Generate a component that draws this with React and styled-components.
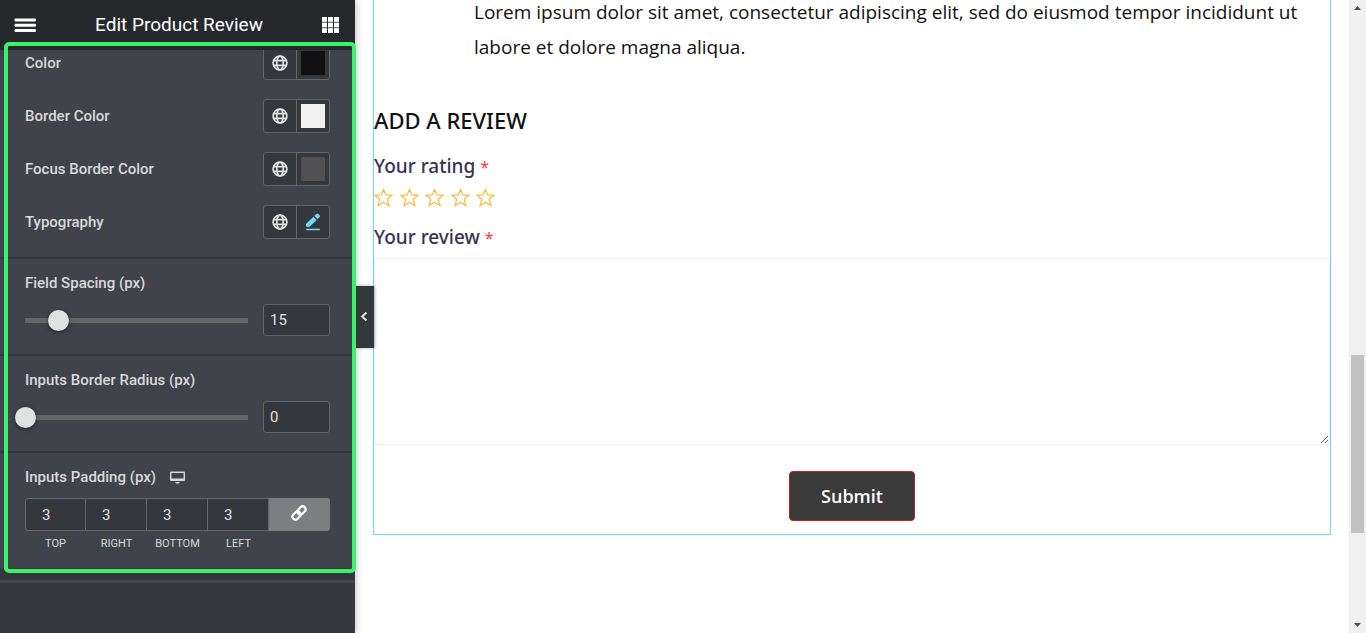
import React, { useState } from 'react';
import styled, { createGlobalStyle } from 'styled-components';

const GlobalStyle = createGlobalStyle`
    *, *::before, *::after {
        box-sizing: border-box;
    }
    body {
        margin: 0;
        background: #fff;
    }
`;

const Page = styled.div`
    display: flex;
    height: 100vh;
    overflow: hidden;
`;

const Panel = styled.aside`
    position: relative;
    z-index: 2;
    flex: 0 0 355px;
    display: flex;
    flex-direction: column;
    background: #34383c;
    box-shadow: 0 0 8px rgba(0, 0, 0, 0.3);
    color: #d8d9db;
    font-family: Roboto, sans-serif;
    font-size: 15px;
    line-height: 18px;
`;

const PanelHeader = styled.header`
    position: relative;
    z-index: 1;
    flex: none;
    display: flex;
    align-items: center;
    justify-content: space-between;
    height: 50px;
    padding: 0 16px 0 14px;
    background: #26292c;
    color: #fff;
`;

const PanelTitle = styled.h1`
    margin: 0;
    font-size: 19px;
    font-weight: 400;
    line-height: 24px;
`;

const IconButton = styled.button`
    display: flex;
    padding: 0;
    border: 0;
    background: none;
    color: inherit;
    cursor: pointer;
`;

const Controls = styled.div`
    border-bottom: 12px solid #34383c;
`;

const Highlight = styled.div`
    position: absolute;
    z-index: 2;
    top: 42px;
    left: 4px;
    right: -1px;
    height: 531px;
    border: 4px solid #3df26b;
    border-radius: 5px;
    pointer-events: none;
`;

const Section = styled.section`
    padding: 15px 25px 18px;
    background: #404349;

    & + & {
        border-top: 2px solid #34383c;
    }
`;

const ColorSection = styled(Section)`
    display: flex;
    flex-direction: column;
    gap: 19px;
    margin-top: -4px;
    padding-top: 0;
`;

const Row = styled.div`
    display: flex;
    align-items: center;
    justify-content: space-between;
`;

const Label = styled.label`
    display: block;
    font-weight: 500;
`;

const LabelRow = styled.div`
    display: flex;
    align-items: center;
    gap: 14px;
    margin-bottom: 12px;
`;

const ButtonPair = styled.div`
    display: flex;
    height: 34px;
    border: 1px solid #64666a;
    border-radius: 3px;
    background: #34383c;
    overflow: hidden;
`;

const PairButton = styled(IconButton)`
    align-items: center;
    justify-content: center;
    width: 32px;
    color: ${props => props.$accent ? '#71d7f7' : '#e0e1e3'};

    & + & {
        width: 33px;
        border-left: 1px solid #64666a;
    }
`;

const Swatch = styled.span`
    width: 24px;
    height: 24px;
    background: ${props => props.$color};
`;

const SliderRow = styled.div`
    display: flex;
    align-items: center;
    gap: 15px;
`;

const SliderTrack = styled.div`
    flex: 1;
    display: flex;
    margin: 0 -10px;
`;

const Slider = styled.input`
    appearance: none;
    width: 100%;
    height: 21px;
    margin: 0;
    background: linear-gradient(#64666a, #64666a) center / calc(100% - 20px) 5px no-repeat;

    &::-webkit-slider-thumb {
        appearance: none;
        width: 21px;
        height: 21px;
        border-radius: 50%;
        background: #e0e1e3;
        box-shadow: 0 1px 4px rgba(0, 0, 0, 0.5);
    }
`;

const NumberInput = styled.input`
    position: relative;
    width: 67px;
    height: 32px;
    padding: 0 6px;
    border: 1px solid #64666a;
    border-radius: 3px;
    background: #34383c;
    color: #e0e1e3;
    font: 400 15px/18px Roboto, sans-serif;
`;

const Dimensions = styled.div`
    display: grid;
    grid-template-columns: repeat(5, 1fr);
`;

const Dimension = styled.div`
    display: flex;
    flex-direction: column;
    align-items: center;
    gap: 7px;
`;

const DimensionInput = styled.input`
    width: 100%;
    height: 33px;
    padding: 0 16px;
    border: 1px solid #64666a;
    border-left-width: ${props => props.$first ? '1px' : '0'};
    border-radius: ${props => props.$first ? '3px 0 0 3px' : '0'};
    background: #34383c;
    color: #e0e1e3;
    font: 400 15px/18px Roboto, sans-serif;
`;

const DimensionLabel = styled.label`
    font-size: 11px;
    line-height: 12px;
    text-transform: uppercase;
`;

const LinkButton = styled(IconButton)`
    align-items: center;
    justify-content: center;
    height: 33px;
    padding: 0 2px 4px 0;
    border-radius: 0 3px 3px 0;
    background: #7d7e82;
    color: #fff;
`;

const PanelFooter = styled.div`
    height: 3px;
    background: #404349;
`;

const CollapseTab = styled.button`
    position: absolute;
    top: 286px;
    left: 100%;
    display: flex;
    align-items: center;
    justify-content: center;
    width: 19px;
    height: 62px;
    padding: 0 2px 0 0;
    border: 0;
    background: #34383c;
    color: #e0e1e3;
    box-shadow: 1px 0 3px rgba(0, 0, 0, 0.3);
`;

const Preview = styled.main`
    flex: 1;
    min-width: 0;
    padding: 0 18px;
    color: #111;
    font-family: "Open Sans", sans-serif;
`;

const Widget = styled.div`
    display: flex;
    flex-direction: column;
    border: solid #71d7f7;
    border-width: 0 1px 1px;
    padding-bottom: 13px;
`;

const Comment = styled.p`
    margin: -5px 20px 40px 100px;
    font-size: 19px;
    font-weight: 400;
    line-height: 35px;
`;

const FormTitle = styled.h2`
    margin: 0 0 19px;
    font-family: "Noto Sans", sans-serif;
    font-size: 22px;
    font-weight: 500;
    line-height: 30px;
    text-transform: uppercase;
`;

const FieldLabel = styled.label`
    color: #3a3153;
    font-family: "Noto Sans", sans-serif;
    font-size: 19px;
    font-weight: 500;
    line-height: 24px;
`;

const Required = styled.span`
    color: #f04040;
    font-size: 16px;
    font-weight: 400;
`;

const Stars = styled.div`
    display: flex;
    justify-content: space-between;
    width: 121px;
    margin: 9px 0 18px;
    color: #fbbc45;
`;

const Review = styled.textarea`
    display: block;
    width: 100%;
    height: 187px;
    margin: 8px 0 26px;
    padding: 3px;
    border: 1px solid #f0f0f0;
    background: #fff;
    outline: 0;
    resize: vertical;
`;

const Submit = styled.button`
    align-self: center;
    height: 50px;
    padding: 0 31px;
    border: 1px solid #c81d1f;
    border-radius: 4px;
    background: #3a3a3a;
    color: #fff;
    font: 600 18px/24px "Open Sans", sans-serif;
    cursor: pointer;
`;

const Scrollbar = styled.div`
    flex: 0 0 17px;
    display: flex;
    flex-direction: column;
    align-items: center;
    justify-content: space-between;
    padding: 6px 0;
    background: #f0f0f0;
    color: #505050;
`;

const ScrollTrack = styled.div`
    flex: 1;
    align-self: stretch;
    display: grid;
    grid-template-rows: 345fr 178fr 90fr;
    padding: 0 2px;

    &::before {
        content: "";
        grid-row: 2;
        background: #c1c1c1;
    }
`;

const MenuIcon = () => (
    <svg width="22" height="16" viewBox="0 0 22 16" fill="currentColor">
        <rect x=".5" y="1.500" width="21.500" height="3" rx="1.2"/>
        <rect x=".5" y="6.700" width="21.500" height="3" rx="1.2"/>
        <rect x=".5" y="12" width="21.500" height="3" rx="1.2"/>
    </svg>
);

const AppsIcon = () => (
    <svg width="17" height="16" viewBox="0 0 17 16" fill="currentColor">
        {[0, 5.6, 11.2].map(y => [0, 6, 12].map(x => <rect key={`${x}-${y}`} x={x} y={y} width="5" height="4.8"/>))}
    </svg>
);

const GlobeIcon = () => (
    <svg width="16" height="16" viewBox="0 0 16 16" fill="none" stroke="currentColor" strokeWidth="1.7">
        <circle cx="8" cy="8" r="6.9"/>
        <ellipse cx="8" cy="8" rx="3.2" ry="6.9"/>
        <path d="M1.5 5.7h13M1.5 10.3h13"/>
    </svg>
);

const PencilIcon = () => (
    <svg width="16" height="18" viewBox="0 0 16 18" fill="currentColor">
        <path d="M1 13.200V11.500Q1 10.900 1.400 10.500L8.400 3.800 11.700 6.900 4.900 13.600Q4.400 14 3.900 14H2Q1 14 1 13.200ZM9.300 2.900 11.200 1.100Q12.300.1 13.400 1.100L14.600 2.200Q15.500 3.200 14.500 4.300L12.600 6.100Z"/>
        <rect x="1" y="15.8" width="14" height="1.4" rx=".7"/>
    </svg>
);

const DesktopIcon = () => (
    <svg width="15" height="13" viewBox="0 0 15 13" fill="currentColor">
        <path fillRule="evenodd" d="M1.200.5h12.600q1.200 0 1.200 1.200v7q0 1.200-1.200 1.200H1.200q-1.200 0-1.200-1.200v-7q0-1.200 1.200-1.200ZM1.400 1.900v5.600h12.200V1.900Z"/>
        <path d="M5.200 11h4.600q-.3 1.500-1.500 1.500H6.700Q5.500 12.500 5.200 11Z"/>
    </svg>
);

const LinkIcon = () => (
    <svg width="16" height="16" viewBox="0 0 16 16" fill="none" stroke="currentColor" strokeWidth="2.200">
        <g transform="rotate(-45 8 8)">
            <rect x="0" y="5" width="9" height="6" rx="3"/>
            <rect x="7" y="5" width="9" height="6" rx="3"/>
        </g>
    </svg>
);

const StarIcon = () => (
    <svg width="19" height="19" viewBox="0 0 19 19" fill="none" stroke="currentColor" strokeWidth="1.3">
        <path d="M9.500 1.500 11.800 6.900 18 7.300 13.300 11.200 14.900 17.600 9.500 14.300 4.100 17.600 5.700 11.200 1 7.300 7.200 6.900Z"/>
    </svg>
);

const ChevronIcon = () => (
    <svg width="8" height="12" viewBox="0 0 8 12" fill="none" stroke="currentColor" strokeWidth="2">
        <path d="M6.500 1.500 2.200 5.500l4.300 4"/>
    </svg>
);

const ArrowIcon = ({ down }) => (
    <svg width="7" height="4" viewBox="0 0 7 4" fill="currentColor">
        <path d={down ? 'M0 0h7L3.500 4Z' : 'M0 4h7L3.500 0Z'}/>
    </svg>
);

const StyleRow = ({ label, color }) => (
    <Row>
        <Label as="span">{label}</Label>
        <ButtonPair>
            <PairButton type="button" aria-label={`${label} global`}><GlobeIcon/></PairButton>
            <PairButton type="button" aria-label={label} $accent={!color}>
                {color ? <Swatch $color={color}/> : <PencilIcon/>}
            </PairButton>
        </ButtonPair>
    </Row>
);

const SliderSection = ({ id, label, initial }) => {
    const [value, setValue] = useState(initial);
    const onChange = e => setValue(e.target.value);
    return (
        <Section>
            <LabelRow><Label htmlFor={id}>{label}</Label></LabelRow>
            <SliderRow>
                <SliderTrack>
                    <Slider type="range" min="0" max="100" value={value} onChange={onChange} aria-label={label}/>
                </SliderTrack>
                <NumberInput id={id} inputMode="numeric" value={value} onChange={onChange}/>
            </SliderRow>
        </Section>
    );
};

const SIDES = ['Top', 'Right', 'Bottom', 'Left'];

const PaddingSection = () => (
    <Section>
        <LabelRow>
            <Label as="span">Inputs Padding (px)</Label>
            <IconButton type="button" aria-label="Desktop"><DesktopIcon/></IconButton>
        </LabelRow>
        <Dimensions>
            {SIDES.map((side, k) => (
                <Dimension key={side}>
                    <DimensionInput id={side} inputMode="numeric" defaultValue="3" $first={k === 0}/>
                    <DimensionLabel htmlFor={side}>{side}</DimensionLabel>
                </Dimension>
            ))}
            <LinkButton type="button" aria-label="Link values"><LinkIcon/></LinkButton>
        </Dimensions>
    </Section>
);

const EditorPanel = () => (
    <Panel>
        <PanelHeader>
            <IconButton type="button" aria-label="Menu"><MenuIcon/></IconButton>
            <PanelTitle>Edit Product Review</PanelTitle>
            <IconButton type="button" aria-label="Widgets"><AppsIcon/></IconButton>
        </PanelHeader>
        <Controls>
            <ColorSection>
                <StyleRow label="Color" color="#111"/>
                <StyleRow label="Border Color" color="#f1f1f1"/>
                <StyleRow label="Focus Border Color" color="#515155"/>
                <StyleRow label="Typography"/>
            </ColorSection>
            <SliderSection id="spacing" label="Field Spacing (px)" initial={15}/>
            <SliderSection id="radius" label="Inputs Border Radius (px)" initial={0}/>
            <PaddingSection/>
        </Controls>
        <PanelFooter/>
        <CollapseTab type="button" aria-label="Collapse"><ChevronIcon/></CollapseTab>
        <Highlight/>
    </Panel>
);

const ReviewPreview = () => (
    <Preview>
        <Widget>
            <Comment>
                Lorem ipsum dolor sit amet, consectetur adipiscing elit, sed do eiusmod tempor incididunt ut
                labore et dolore magna aliqua.
            </Comment>
            <FormTitle>Add a review</FormTitle>
            <FieldLabel as="span">Your rating <Required>*</Required></FieldLabel>
            <Stars>
                {[1, 2, 3, 4, 5].map(n => (
                    <IconButton type="button" key={n} aria-label={`Rate ${n}`}><StarIcon/></IconButton>
                ))}
            </Stars>
            <FieldLabel htmlFor="review">Your review <Required>*</Required></FieldLabel>
            <Review id="review"/>
            <Submit type="submit">Submit</Submit>
        </Widget>
    </Preview>
);

const App = () => (
    <Page>
        <GlobalStyle/>
        <EditorPanel/>
        <ReviewPreview/>
        <Scrollbar>
            <ArrowIcon/>
            <ScrollTrack/>
            <ArrowIcon down/>
        </Scrollbar>
    </Page>
);

export default App;
